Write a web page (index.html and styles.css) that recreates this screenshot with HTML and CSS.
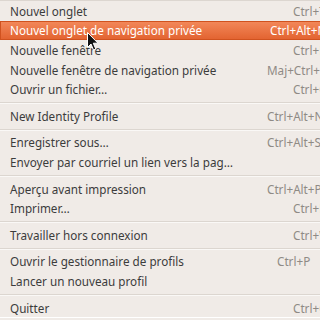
FILE: index.html
```html
<!DOCTYPE html>
<html>

<head>
    <title>Menu Fichier</title>
    <link rel="stylesheet" href="styles.css">
</head>

<body>
    <div class="menu">
        <div class="sep top"></div>
        <div class="item"><span class="label">Nouvel onglet</span><span class="accel">Ctrl+T</span></div>
        <div class="item active"><span class="label">Nouvel onglet de navigation privée</span><span class="accel wide">Ctrl+Alt+N</span></div>
        <div class="item"><span class="label">Nouvelle fenêtre</span><span class="accel">Ctrl+N</span></div>
        <div class="item"><span class="label">Nouvelle fenêtre de navigation privée</span><span class="accel wide">Maj+Ctrl+P</span></div>
        <div class="item"><span class="label">Ouvrir un fichier…</span><span class="accel">Ctrl+O</span></div>
        <div class="sep"></div>
        <div class="item"><span class="label">New Identity Profile</span><span class="accel wide">Ctrl+Alt+N</span></div>
        <div class="sep"></div>
        <div class="item"><span class="label">Enregistrer sous…</span><span class="accel wide">Ctrl+Alt+S</span></div>
        <div class="item"><span class="label">Envoyer par courriel un lien vers la pag…</span><span class="accel"></span></div>
        <div class="sep"></div>
        <div class="item"><span class="label">Aperçu avant impression</span><span class="accel wide">Ctrl+Alt+P</span></div>
        <div class="item"><span class="label">Imprimer…</span><span class="accel">Ctrl+P</span></div>
        <div class="sep"></div>
        <div class="item"><span class="label">Travailler hors connexion</span><span class="accel">Ctrl+W</span></div>
        <div class="sep"></div>
        <div class="item"><span class="label">Ouvrir le gestionnaire de profils</span><span class="accel short">Ctrl+P</span></div>
        <div class="item"><span class="label">Lancer un nouveau profil</span><span class="accel"></span></div>
        <div class="sep"></div>
        <div class="item"><span class="label">Quitter</span><span class="accel">Ctrl+Q</span></div>
        <div class="edge"></div>

        <svg class="cursor" width="12" height="19" viewBox="0 0 12 19">
            <path d="M0.5 0.5 L0.5 15.5 L4 12 L6.5 18 L8.8 17 L6.3 11.2 L11 11.2 Z" fill="#111" stroke="#fff" stroke-width="1"/>
        </svg>
    </div>
</body>

</html>
```

FILE: styles.css
```css
html, body {
    margin: 0;
    padding: 0;
    overflow: hidden;
    background: #f0ebe7;
}

.menu {
    position: relative;
    width: 345px;
    background: #f0ebe7;
    font-family: "Noto Sans", sans-serif;
    font-size: 11.7px;
    color: #3c3c3c;
}

.item {
    display: flex;
    align-items: center;
    height: 19.6px;
    padding: 0 0 0 10px;
}

.label {
    flex: 1;
    white-space: nowrap;
}

.accel {
    width: 52px;
    color: #8f8a85;
    white-space: nowrap;
}

.accel.wide {
    width: 78px;
}

.accel.short {
    width: 68px;
}

.active {
    background: linear-gradient(#f3895b, #e2622f);
    box-shadow: inset 0 0 0 1px #d0521f;
    color: #ffffff;
}

.active .accel {
    color: #ffffff;
    width: 75px;
}

.sep {
    height: 1px;
    margin: 3px 0 2px;
    background: #dcd6d0;
    border-bottom: 1px solid #faf8f6;
}

.sep.top {
    margin: 0;
    border-bottom: none;
}

.edge {
    height: 1px;
    background: #ffffff;
}

.cursor {
    position: absolute;
    left: 87px;
    top: 32px;
}
```
